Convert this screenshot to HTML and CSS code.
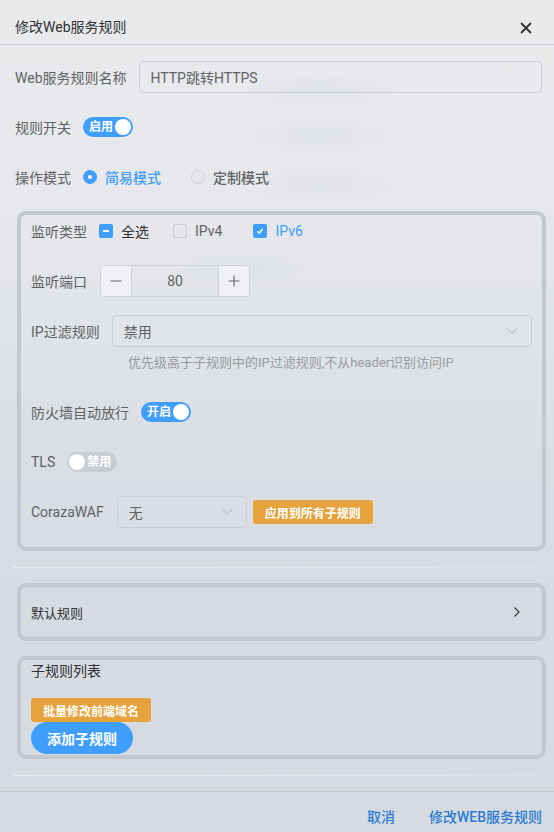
FILE: index.html
```html
<!DOCTYPE html>
<html lang="zh">
<head>
<meta charset="utf-8">
<title>修改Web服务规则</title>
<link rel="stylesheet" href="styles.css">
</head>
<body>
<div class="dialog">
  <header class="dlg-head">
    <span class="dlg-title">修改Web服务规则</span>
    <svg class="close" width="12" height="12" viewBox="0 0 12 12"><path d="M1.5 1.5 L10.5 10.5 M10.5 1.5 L1.5 10.5" stroke="#303133" stroke-width="1.8" stroke-linecap="round"/></svg>
  </header>

  <main class="dlg-body">
    <div class="row">
      <span class="label">Web服务规则名称</span>
      <div class="input grow"><span class="val">HTTP跳转HTTPS</span></div>
    </div>
    <div class="row">
      <span class="label">规则开关</span>
      <span class="switch on"><span class="sw-text">启用</span><span class="knob"></span></span>
    </div>
    <div class="row">
      <span class="label">操作模式</span>
      <span class="radio checked"><span class="r-dot"></span><span class="r-text">简易模式</span></span>
      <span class="radio"><span class="r-dot"></span><span class="r-text">定制模式</span></span>
    </div>

    <section class="group">
      <div class="row">
        <span class="label">监听类型</span>
        <span class="check indet"><span class="box"><span class="bar"></span></span><span class="c-text strong">全选</span></span>
        <span class="check"><span class="box"></span><span class="c-text">IPv4</span></span>
        <span class="check checked"><span class="box"><svg width="10" height="10" viewBox="0 0 10 10"><path d="M2.3 5.2 L4.2 7 L7.8 3" fill="none" stroke="#fff" stroke-width="1.3"/></svg></span><span class="c-text">IPv6</span></span>
      </div>
      <div class="row">
        <span class="label">监听端口</span>
        <div class="number">
          <span class="nbtn"><svg width="12" height="12" viewBox="0 0 12 12"><path d="M0.5 6 H11.5" stroke="#606266" stroke-width="1.1"/></svg></span>
          <span class="nval">80</span>
          <span class="nbtn"><svg width="12" height="12" viewBox="0 0 12 12"><path d="M0.5 6 H11.5 M6 0.5 V11.5" stroke="#606266" stroke-width="1.1"/></svg></span>
        </div>
      </div>
      <div class="row tight">
        <span class="label">IP过滤规则</span>
        <div class="input select grow"><span class="val">禁用</span><svg class="chev" width="12" height="8" viewBox="0 0 12 8"><path d="M1 1.5 L6 6 L11 1.5" fill="none" stroke="#c0c4cc" stroke-width="1.1"/></svg></div>
      </div>
      <div class="hint">优先级高于子规则中的IP过滤规则,不从header识别访问IP</div>
      <div class="row">
        <span class="label">防火墙自动放行</span>
        <span class="switch on"><span class="sw-text">开启</span><span class="knob"></span></span>
      </div>
      <div class="row">
        <span class="label">TLS</span>
        <span class="switch off"><span class="knob"></span><span class="sw-text">禁用</span></span>
      </div>
      <div class="row">
        <span class="label">CorazaWAF</span>
        <div class="input select waf"><span class="val">无</span><svg class="chev" width="12" height="8" viewBox="0 0 12 8"><path d="M1 1.5 L6 6 L11 1.5" fill="none" stroke="#c0c4cc" stroke-width="1.1"/></svg></div>
        <button class="btn-warn">应用到所有子规则</button>
      </div>
    </section>

    <div class="divider"></div>

    <section class="group collapse">
      <span class="c-title">默认规则</span>
      <svg width="8" height="12" viewBox="0 0 8 12"><path d="M1.5 1.5 L6 6 L1.5 10.5" fill="none" stroke="#303133" stroke-width="1.1"/></svg>
    </section>

    <section class="group sub">
      <div class="sub-title">子规则列表</div>
      <div class="sub-actions">
        <button class="btn-warn">批量修改前端域名</button>
        <button class="btn-primary">添加子规则</button>
      </div>
    </section>

    <div class="divider lower"></div>
  </main>

  <footer class="dlg-foot">
    <button class="btn-text">取消</button>
    <button class="btn-text">修改WEB服务规则</button>
  </footer>
</div>
</body>
</html>
```

FILE: styles.css
```css
* { box-sizing: border-box; }
html, body { margin: 0; padding: 0; }
body {
  width: 554px;
  height: 832px;
  overflow: hidden;
  font-family: Roboto, "Noto Sans CJK SC", sans-serif;
  font-size: 14px;
  color: #606266;
  background:
    radial-gradient(ellipse 80px 18px at 320px 90px, rgba(200,208,220,0.28), transparent),
    radial-gradient(ellipse 80px 18px at 320px 135px, rgba(200,208,220,0.28), transparent),
    radial-gradient(ellipse 80px 18px at 320px 185px, rgba(200,208,220,0.24), transparent),
    radial-gradient(ellipse 70px 18px at 240px 268px, rgba(200,208,220,0.24), transparent),
    linear-gradient(180deg, #e9eaec 0%, #e7e8eb 25%, #dde1e6 48%, #d7dce3 70%, #d6dbe2 100%);
}
.dialog { display: flex; flex-direction: column; height: 832px; }

.dlg-head {
  height: 45px;
  padding: 17px 22px 0 15px;
  display: flex;
  align-items: flex-start;
  justify-content: space-between;
  border-bottom: 1px solid #c9cbcf;
}
.dlg-title { font-size: 14px; color: #303133; line-height: 20px; }
.close { margin-top: 5px; }

.dlg-body { padding: 16px 12px 0 15px; flex: 1; }

.row { display: flex; align-items: center; height: 32px; margin-bottom: 18px; }
.row.tight { margin-bottom: 0; }
.label { padding-right: 12px; white-space: nowrap; font-size: 14px; color: #606266; }
.grow { flex: 1; }

.input {
  height: 32px;
  border: 1px solid #c9cdd4;
  border-radius: 4px;
  display: flex;
  align-items: center;
  padding: 0 11px;
}
.input .val { color: #606266; font-size: 14px; }
.select { justify-content: space-between; padding-right: 13px; }
.waf { width: 130px; margin-left: 1px; }

.switch {
  width: 50px; height: 20px; border-radius: 10px;
  display: inline-flex; align-items: center; justify-content: space-between;
  padding: 0 2px 0 6px;
  color: #fff; font-size: 12px; font-weight: 700;
}
.switch.on { background: #409eff; }
.switch.off { background: #c8ccd3; padding: 0 6px 0 2px; }
.knob { width: 16px; height: 16px; border-radius: 50%; background: #fff; }
.sw-text { line-height: 20px; }

.radio { display: inline-flex; align-items: center; margin-right: 30px; }
.r-dot {
  width: 14px; height: 14px; border-radius: 50%;
  border: 1px solid #c9cdd3; margin-right: 8px; position: relative;
}
.radio.checked .r-dot { background: #409eff; border-color: #409eff; }
.radio.checked .r-dot::after {
  content: ""; position: absolute; left: 4px; top: 4px;
  width: 4px; height: 4px; border-radius: 50%; background: #fff;
}
.radio.checked .r-text { color: #409eff; }
.r-text { font-size: 14px; font-weight: 500; color: #606266; }

.group {
  border: 4px solid #c3c7ce;
  border-radius: 9px;
  margin: 1px -4px 0 2px;
  padding: 0 10px 1px 10px;
}

.check { display: inline-flex; align-items: center; margin-right: 24px; }
.check + .check { margin-right: 31px; }
.check .box {
  width: 14px; height: 14px; border-radius: 2px;
  border: 1px solid #c9cdd4; margin-right: 8px;
  display: inline-flex; align-items: center; justify-content: center;
}
.check.indet .box, .check.checked .box { background: #409eff; border-color: #409eff; }
.bar { width: 6px; height: 2px; background: #fff; }
.c-text { font-size: 14px; color: #606266; }
.c-text.strong { color: #303133; }
.check.checked .c-text { color: #409eff; }

.number {
  width: 150px; height: 32px; margin-left: 1px;
  border: 1px solid #cfd3d9; border-radius: 4px;
  display: grid; grid-template-columns: 31px 1fr 31px;
  overflow: hidden;
}
.nbtn { background: #eef0f3; display: flex; align-items: center; justify-content: center; }
.nbtn:first-child { border-right: 1px solid #cfd3d9; }
.nbtn:last-child { border-left: 1px solid #cfd3d9; }
.nval { display: flex; align-items: center; justify-content: center; color: #606266; }

.hint {
  margin: 6px 0 23px 97px;
  line-height: 20px;
  font-size: 13px;
  color: #999ba1;
}

.btn-warn {
  height: 24px; border: 0; border-radius: 3px;
  background: #e6a23c; color: #fff;
  font-family: inherit; font-size: 12px; font-weight: 700;
  padding: 0 12px; margin-left: 6px;
}
.btn-primary {
  height: 32px; border: 0; border-radius: 16px;
  background: #409eff; color: #fff;
  font-family: inherit; font-size: 14px; font-weight: 700;
  padding: 0 16px;
}

.divider { height: 1px; margin: 16px 0 15px -2px; background: linear-gradient(90deg, rgba(238,241,245,0.75), rgba(232,236,241,0.35)); }
.divider.lower { margin: 16px 0 0 -2px; }

.collapse {
  height: 58px;
  display: flex; align-items: center; justify-content: space-between;
  padding: 0 21px 0 10px;
}
.c-title { font-size: 13px; color: #303133; }

.sub { margin-top: 15px; }
.sub-title { line-height: 22px; font-size: 14px; color: #303133; }
.sub-actions { display: flex; flex-direction: column; align-items: flex-start; margin-top: 16px; }
.sub-actions .btn-warn { margin-left: 0; }

.dlg-foot {
  height: 41px;
  border-top: 1px solid #c6c9ce;
  display: flex; justify-content: flex-end; align-items: center;
  padding: 8px 12px 0 0;
  gap: 34px;
}
.btn-text {
  border: 0; background: none; padding: 0;
  font-family: inherit; font-size: 14px; font-weight: 500; color: #2a7bd0;
}
```
